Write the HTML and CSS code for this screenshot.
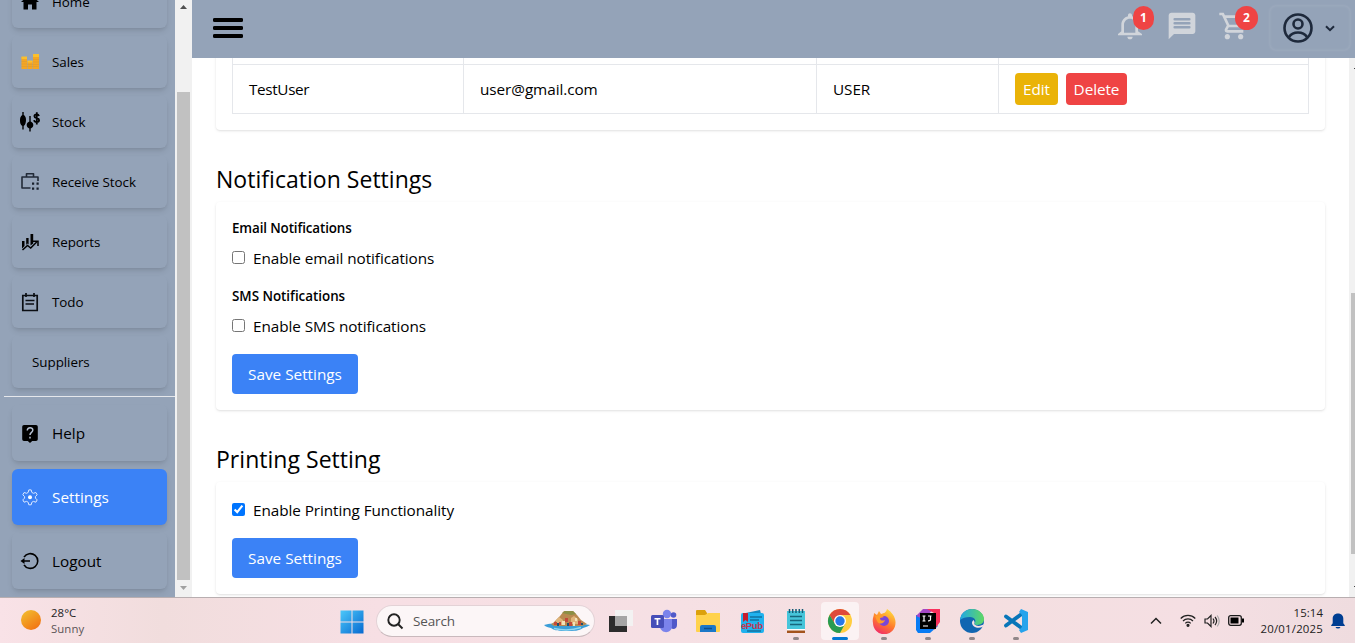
FILE: index.html
```html
<!DOCTYPE html>
<html lang="en">
<head>
<meta charset="utf-8">
<title>Settings</title>
<link rel="stylesheet" href="styles.css">
</head>
<body>
<div class="app">
  <aside class="sidebar">
    <nav class="menu">
      <a class="item"><svg class="ico" viewBox="0 0 20 20"><path d="M10 2 1 10h2.500v7.500h4.500v-5h4v5h4.500V10H19z"/></svg><span class="t-home">Home</span></a>
      <a class="item"><svg class="ico" viewBox="0 0 20 20"><path fill="#f5a623" d="M1.500 5h5.500v12H1.500zM7.500 9h5v8h-5zM13 3h6v14h-6z"/><path fill="#fbc02d" d="M1.500 4.500h5.500V7H1.500zM7.500 8.500h5v2h-5zM13 2h6v3h-6z"/><path d="M1.500 9.500h5.500M1.500 12h5.500M1.500 14.500h17M13 7.500h6M13 10h6M7.500 12.500H19" stroke="#d99a35" stroke-width=".6"/></svg><span>Sales</span></a>
      <a class="item"><svg class="ico" viewBox="0 0 20 20"><path d="M2.300 0h1.400v3c1.700 1 2.300 2.500 2.300 5s-.6 5-2.300 6v3.500H2.300V14C.5 13 0 11 0 8.500S.5 4 2.300 3zM9.300 4h1.400v5.500c1.900.8 2.600 2 2.600 3.500s-.7 2.700-2.600 3.500v3H9.300v-3C7.400 15.700 6.700 14.500 6.700 13s.7-2.700 2.600-3.500z"/><path d="M19 4c-.4-1.200-1.200-1.700-2.200-1.700-1.600 0-2.400.8-2.400 1.900 0 2.600 4.700 1.200 4.700 3.900 0 1.300-1 2.100-2.500 2.100-1.400 0-2.300-.8-2.500-2M16.800.3v12.200" fill="none" stroke="#000" stroke-width="1.800"/></svg><span>Stock</span></a>
      <a class="item"><svg class="ico" viewBox="0 0 20 20"><path d="M18 9V5H2v11h8.500M6.500 5V1.700h7V5" fill="none" stroke="#222b38" stroke-width="1.600" stroke-linejoin="round"/><path d="M12 10.500h2.200v2.200H12zM16.500 10.500h2.200v2.200h-2.200zM12 15.500h2.200v2.200H12zM16.500 15.500h2.200v2.200h-2.200z" fill="#18202c"/></svg><span>Receive Stock</span></a>
      <a class="item"><svg class="ico" viewBox="0 0 20 20"><path d="M2 9h2.500v5L2 16.500zM6.200 6h2.400v6.500L7.500 11.500 6.200 13zM10.500 2h2.700v9.500l-2.700 2z"/><path d="m2.500 18 5-4.500 3.200 2.500 6-6M13 9.300h5V14" fill="none" stroke="#000" stroke-width="1.500"/></svg><span>Reports</span></a>
      <a class="item"><svg class="ico" viewBox="0 0 20 20"><path d="M2.800 3.500h14.400v15H2.800zM6 1v4M14 1v4M5.500 8.500h9M5.500 12h8.500" fill="none" stroke="#0b0e13" stroke-width="1.700"/></svg><span>Todo</span></a>
      <a class="item"><span>Suppliers</span></a>
      <hr class="rule">
      <a class="item tall"><svg class="ico" viewBox="0 0 20 20"><path d="M4 2h12a1.800 1.800 0 0 1 1.800 1.800v12.400A1.800 1.800 0 0 1 16 18h-3.800L10 20l-2.200-2H4a1.800 1.800 0 0 1-1.800-1.800V3.800A1.800 1.800 0 0 1 4 2z"/><path d="M7.300 7.500C7.300 3.600 13 4 12.800 7.300 12.700 9.400 10 9.500 10 12M10 13.700v1.800" fill="none" stroke="#b5c0d2" stroke-width="1.500"/></svg><span>Help</span></a>
      <a class="item tall active"><svg class="ico" viewBox="0 0 20 20"><path d="M8.800 2.900h2.400l.6 2.500 1.600.9 2.500-.8 1.300 2.300-1.800 1.800v1.500l1.800 1.800-1.300 2.300-2.500-.8-1.600.9-.6 2.500H8.800l-.6-2.500-1.600-.9-2.500.8-1.300-2.300 1.800-1.800V9.600L2.800 7.800l1.300-2.300 2.500.8 1.600-.9z" fill="none" stroke="#dbe8ff" stroke-width="1" stroke-linejoin="round"/><circle cx="10" cy="10.300" r="2" fill="#fff"/></svg><span>Settings</span></a>
      <a class="item tall"><svg class="ico" viewBox="0 0 20 20"><path d="M4 6.200a7.400 7.400 0 1 1 0 7.600M2 10h8" fill="none" stroke="#000" stroke-width="1.600"/><path d="m.5 10 4-3v6z"/></svg><span>Logout</span></a>
    </nav>
    <div class="scrollbar">
      <svg width="17" height="15" viewBox="0 0 17 15"><path d="M5 9 8.500 5 12 9z" fill="#505050"/></svg>
      <div class="thumb"></div>
      <svg width="17" height="17" viewBox="0 0 17 17"><path d="M5 6h7l-3.500 4z" fill="#a0a0a0"/></svg>
    </div>
  </aside>
  <section class="content">
    <header class="topbar">
      <svg class="burger" width="30" height="22" viewBox="0 0 30 22"><path d="M1.500 3h27M1.500 11h27M1.500 19h27" stroke="#000" stroke-width="3.800" stroke-linecap="round"/></svg>
      <div class="actions">
        <div class="action"><svg width="32" height="32" viewBox="0 0 24 24" fill="#d1d5db"><path d="M12 22c1.100 0 2-.9 2-2h-4c0 1.100.9 2 2 2zm6-6v-5c0-3.070-1.630-5.640-4.500-6.320V4c0-.83-.67-1.500-1.500-1.500s-1.500.67-1.500 1.500v.68C7.640 5.360 5.500 7.920 5.500 11v5l-2.500 2v1h18v-1l-3-2zm-2 1H7.500v-6c0-2.480 2.010-4.500 4.500-4.500s4 2.020 4 4.500v6z"/></svg><b class="badge">1</b></div>
        <div class="action"><svg width="32" height="32" viewBox="0 0 24 24" fill="#d1d5db"><path d="M20 2H4c-1.100 0-1.990.9-1.990 2L2 22l4-4h14c1.100 0 2-.9 2-2V4c0-1.100-.9-2-2-2z"/><path d="M6.500 7h11M6.500 10h11M6.500 13h11" stroke="#94a3b8" stroke-width="1.900" stroke-linecap="round"/></svg></div>
        <div class="action"><svg width="32" height="32" viewBox="0 0 24 24" fill="#d1d5db"><path d="M15.550 13c.75 0 1.410-.41 1.750-1.030l3.580-6.490A.996.996 0 0 0 20.010 4H5.210l-.94-2H1v2h2l3.600 7.590-1.350 2.440C4.520 15.370 5.480 17 7 17h12v-2H7l1.100-2h7.450zM6.160 6h12.150l-2.760 5H8.530L6.160 6zM7 18c-1.100 0-1.990.9-1.990 2S5.900 22 7 22s2-.9 2-2-.9-2-2-2zm10 0c-1.100 0-1.990.9-1.990 2s.89 2 1.990 2 2-.9 2-2-.9-2-2-2z"/></svg><b class="badge">2</b></div>
        <div class="profile">
          <svg width="30" height="30" viewBox="0 0 30 30" fill="none" stroke="#1e293b" stroke-width="2.600"><circle cx="15" cy="15" r="13.500"/><circle cx="15" cy="11" r="4.500"/><path d="M6 24c4-6 14-6 18 0"/></svg>
          <svg width="10" height="7" viewBox="0 0 10 7" fill="none" stroke="#1e293b" stroke-width="2"><path d="m1 1.200 4 4 4-4"/></svg>
        </div>
      </div>
    </header>
    <div class="viewport">
      <main class="page">
        <div class="card users">
          <table class="table"><colgroup><col class="c1"><col class="c2"><col class="c3"><col></colgroup><tbody><tr class="prev"><td></td><td></td><td></td><td></td></tr>
          <tr><td class="name">TestUser</td><td>user@gmail.com</td><td>USER</td><td><div class="btns"><button class="small edit">Edit</button><button class="small delete">Delete</button></div></td></tr></tbody></table>
        </div>
        <h2 class="heading">Notification Settings</h2>
        <div class="card">
          <h3 class="sub">Email Notifications</h3>
          <label class="check"><input type="checkbox"><span>Enable email notifications</span></label>
          <h3 class="sub second">SMS Notifications</h3>
          <label class="check"><input type="checkbox"><span>Enable SMS notifications</span></label>
          <button class="save">Save Settings</button>
        </div>
        <h2 class="heading">Printing Setting</h2>
        <div class="card">
          <label class="check first"><input type="checkbox" checked><span>Enable Printing Functionality</span></label>
          <button class="save">Save Settings</button>
        </div>
      </main>
      <div class="pagebar"><i></i><div class="pagethumb"></div><i></i></div>
    </div>
  </section>
</div>
<footer class="taskbar">
  <div class="weather">
    <div class="sun"></div>
    <div><div>28°C</div><div class="dim">Sunny</div></div>
  </div>
  <div class="dock">
    <svg class="win" width="24" height="24" viewBox="0 0 24 24"><defs><linearGradient id="w" x1="0" y1="0" x2="1" y2="1"><stop offset="0" stop-color="#4cc8fa"/><stop offset="1" stop-color="#0669d0"/></linearGradient></defs><path fill="url(#w)" d="M.5 .5h11v11H.5zM12.500.5h11v11h-11zM.5 12.500h11v11H.5zM12.500 12.500h11v11h-11z"/></svg>
    <div class="search">
      <svg width="17" height="17" viewBox="0 0 17 17" fill="none" stroke="#222" stroke-width="1.900"><circle cx="7" cy="7" r="5.700"/><path d="m11 11 4.500 4.500"/></svg>
      <span>Search</span>
      <svg class="island" width="46" height="22" viewBox="0 0 46 22"><path fill="#3b9ed8" d="M0 15c6-2 10-1 14-2h20c4 1 8 1 12 2-3 2-5 2-7 3-4 3-9 3-16 3-8 0-12 0-16-3-3-1-5-1-7-3z"/><path d="M10 18.500c9 2 18 2 27-1" stroke="#91d7ef" stroke-width="1.500" fill="none"/><path fill="#b98a50" d="m9 13 7-7 4-5h9l4 4 4 5 6 4-5 2H10l-3-2z"/><path fill="#8b8f45" d="m18 3 3-2h8l3 3-5 1z"/><path fill="#e0b47a" d="m12 10 3-3 4 3v5h-7zM27 8l3-2 4 3v5h-7z"/><path fill="#c4493a" d="M10 12h3v3h-3zM21 8h3v4h-3zM34 11h3v4h-3zM25 12h3v4h-3zM15 12h2v3h-2z"/><path fill="#f3e1b7" d="M18 11h3v4h-3zM29 12h2v4h-2zM31 8h2v3h-2z"/><path fill="#274f68" d="M13 13h2v3h-2zM23 13h2v3h-2zM37 13h2v2h-2z"/></svg>
    </div>
    <div class="apps">
      <div class="app-icon"><svg viewBox="0 0 26 26"><path fill="#2c2c2c" d="M2 8h18v16H2z"/><path fill="#f2f2f2" fill-opacity=".95" d="M8 2h18v16H8z"/><path fill="#a5a5a5" d="M8 8h12v10H8z"/></svg></div>
      <div class="app-icon"><svg viewBox="0 0 26 26"><circle cx="16" cy="6" r="4.200" fill="#7b83eb"/><circle cx="22.500" cy="7" r="2.800" fill="#5059c9"/><path fill="#5059c9" d="M19 11h7v6c0 4-4 5-6 3z"/><path fill="#7b83eb" d="M9 11h12v7c0 8-11 8-12 1z"/><rect y="7" width="13" height="13" rx="1.500" fill="#464eb8"/><path fill="#fff" d="M3.500 10h6v1.600H7.300V17H5.600v-5.400H3.500z"/></svg></div>
      <div class="app-icon"><svg viewBox="0 0 26 26"><path fill="#dca10b" d="M1 3q0-1 1-1h8l2 3v5H1z"/><path fill="#ffd24c" d="M1 7h9l3-2h12v18q0 1-1 1H2q-1 0-1-1z"/><path fill="#1b78c8" d="M5 24v-5q0-2 2-2h12q2 0 2 2v5z"/><path d="M9 20.500h8" stroke="#0c4f8c" stroke-width="1.500"/></svg></div>
      <div class="app-icon"><svg viewBox="0 0 26 26"><path fill="#1787bd" d="m2 6 19-4 1 4z"/><rect x="2" y="5" width="23" height="20" rx="2" fill="#20b2ee"/><path fill="#c51c2d" d="M4 5h5v9l-2.500-2L4 14z"/><path d="M11 9h12M11 12h9M8 23h14" stroke="#13729f" stroke-width="1.500"/><text x="2" y="21" textLength="22" font-family="Liberation Sans" font-weight="bold" font-size="9.500" fill="#c5354f">ePub</text></svg></div>
      <div class="app-icon run"><svg viewBox="0 0 26 26"><path fill="#a3531c" d="M4 21h18v4H4z"/><path fill="#fff" d="M4 20h18v2.500H4z"/><path fill="#46c5da" d="M4 3h18v18H4z"/><path d="M7 8.500h12M7 12.500h12M7 16.500h12" stroke="#17667c" stroke-width="1.500"/><path d="M6.500 1v4M9.700 1v4M13 1v4M16.300 1v4M19.500 1v4" stroke="#155b76" stroke-width="1.500"/></svg></div>
      <div class="app-icon run current"><svg viewBox="0 0 26 26"><circle cx="13" cy="13" r="12" fill="#ffcd40"/><path fill="#df4a3c" d="M2.600 7a12 12 0 0 1 20.800 0H13L8 16z"/><path fill="#279b52" d="M2.600 7a12 12 0 0 0 10.400 18l5-9-10 0z"/><circle cx="13" cy="13" r="6" fill="#fff"/><circle cx="13" cy="13" r="4.700" fill="#2778e8"/></svg></div>
      <div class="app-icon run"><svg viewBox="0 0 26 26"><defs><linearGradient id="f" x1=".8" y1="0" x2=".3" y2="1"><stop stop-color="#ffe33c"/><stop offset=".55" stop-color="#ff7b2b"/><stop offset="1" stop-color="#f12b68"/></linearGradient></defs><path fill="url(#f)" d="M3 5l3 2 2-4 2 3c3-1 5-1 6-5 5 3 9 9 8.500 14A11 11 0 0 1 2 15C1 10 3 9 3 5z"/><circle cx="13" cy="13" r="5" fill="#7946d8"/><path fill="#ff9b29" d="M4 8c4-2 7-1 9 1l-4 1c0 3 3 3 5 2-1 4-6 5-8 1z"/></svg></div>
      <div class="app-icon run"><svg viewBox="0 0 26 26"><path fill="#087cf4" d="M1 7h12l10 11-8 7H3l-2-3z"/><path fill="#a348c5" d="m1 8 7-7h11L8 11z"/><path fill="#fa315c" d="M12 1h13v13l-6 8V5z"/><path fill="#000" d="M5 5h16v16H5z"/><path d="M7.500 8h3M9 8v5M7.500 13h3M13 8h3.500M15.500 8v3.500q0 1.500-2.500 1.300M8 18h5" fill="none" stroke="#fff" stroke-width="1.200"/></svg></div>
      <div class="app-icon run"><svg viewBox="0 0 26 26"><defs><linearGradient id="e"><stop stop-color="#20a7e5"/><stop offset="1" stop-color="#60d962"/></linearGradient></defs><circle cx="13" cy="13" r="12" fill="#1166b1"/><path fill="url(#e)" d="M1 12C2 5 7 1 13 1c7 0 12 5 12 10 0 6-7 7-10 5 3-3 1-7-4-7-4 0-8 1-10 3z"/><path fill="#f6e2e5" d="M15 16c3 3 7 2 10.500 0l-2 3c-5 2-10 0-10.500-4 0-2 1-2 1.500-3 1 1 1.500 3 .5 4z"/></svg></div>
      <div class="app-icon run"><svg viewBox="0 0 26 26"><path fill="none" stroke="#0876b9" stroke-width="3.800" stroke-linecap="round" d="M20 5 3 17.500M3 8.500 20 21"/><path fill="#26a3ec" d="m18 1 7 3v18l-7 3-2-3 3-3V7l-3-3z"/></svg></div>
    </div>
  </div>
  <div class="tray">
    <svg width="12" height="8" viewBox="0 0 12 8" fill="none" stroke="#222" stroke-width="1.500"><path d="m1 6.500 5-5 5 5"/></svg>
    <svg class="wifi" width="16" height="13" viewBox="0 0 16 13" fill="none" stroke="#222" stroke-width="1.200"><path d="M.7 4.500a10.300 10.300 0 0 1 14.600 0M3 7a7 7 0 0 1 10 0M5.300 9.300a3.800 3.800 0 0 1 5.400 0"/><circle cx="8" cy="11.300" r="1" fill="#222"/></svg>
    <svg class="vol" width="16" height="14" viewBox="0 0 16 14" fill="none" stroke="#222" stroke-width="1.200"><path d="M1 5h2.500L7 1.500v11L3.500 9H1zM9 4.500q2 2.500 0 5M11 3q3.300 4 0 8"/><path stroke="#aaa" d="M13.200 1.500q4 5.500 0 11"/></svg>
    <svg class="bat" width="16" height="11" viewBox="0 0 16 11"><rect x=".7" y=".7" width="12.600" height="9.600" rx="2" fill="none" stroke="#1a1a1a" stroke-width="1.300"/><path d="M2.500 2.500h8v6h-8zM14 3.500h2v4h-2z"/></svg>
    <div class="clock"><div>15:14</div><div class="date">20/01/2025</div></div>
    <svg class="bell" width="14" height="16" viewBox="0 0 14 16" fill="#003e92"><path d="M7 .5c3.300 0 5.300 2.200 5.300 5v4.700l1.500 2v.8H.2v-.8l1.500-2V5.500c0-2.800 2-5 5.300-5zM4.500 14h5Q9 15.500 7 15.500T4.500 14z"/></svg>
  </div>
</footer>
</body>
</html>
```

FILE: styles.css
```css
* { box-sizing: border-box; }
body { margin: 0; height: 643px; overflow: hidden; display: flex; flex-direction: column; font-family: "Open Sans", "Noto Sans", sans-serif; font-size: 15.3px; line-height: 24px; letter-spacing: -.07px; color: #000; background: #fff; }
h2, h3 { margin: 0; }
button { border: 0; font: inherit; letter-spacing: inherit; color: #fff; border-radius: 4px; }
svg { display: block; flex: none; }

.app { height: 597px; flex: none; display: flex; overflow: hidden; }
.sidebar { width: 192px; flex: none; display: flex; background: #94a3b8; overflow: hidden; }
.menu { width: 175px; flex: none; margin-top: -24px; display: flex; flex-direction: column; gap: 8px; padding-left: 12px; }
.item { width: 155px; height: 52px; flex: none; display: flex; align-items: center; gap: 12px; padding-left: 8px; border-radius: 6px; font-size: 13.4px; letter-spacing: -.04px; box-shadow: 0 4px 6px -1px rgba(0,0,0,.1), 0 2px 4px -2px rgba(0,0,0,.1); }
.item > span:only-child { padding-left: 12px; }
.tall { height: 56px; font-size: 15.3px; letter-spacing: 0; }
.active { background: #3b82f6; color: #fff; }
.ico { width: 20px; height: 20px; }
.rule { width: 171px; height: 1px; margin: 0 0 0 -8px; border: 0; background: #e5e7eb; flex: none; }
.scrollbar { width: 17px; display: flex; flex-direction: column; align-items: center; background: #f1f1f1; }
.thumb { width: 13px; height: 488px; margin-top: 77px; background: #c1c1c1; }

.content { flex: 1; min-width: 0; display: flex; flex-direction: column; }
.topbar { height: 58px; flex: none; display: flex; justify-content: space-between; align-items: center; background: #94a3b8; padding: 0 5px 2px 21px; }
.actions { display: flex; align-items: center; gap: 20px; }
.action { position: relative; margin-top: -5px; }
.badge { position: absolute; top: -4px; right: -8px; width: 21px; height: 24px; border-radius: 12px; background: #ef4444; color: #fff; font-size: 12px; font-weight: 700; text-align: center; }
.action:nth-child(3) .badge { width: 23px; }
.profile { width: 80px; height: 44px; display: flex; align-items: center; gap: 12px; padding-left: 13px; border-radius: 6px; box-shadow: 0 0 3px rgba(255,255,255,.16), inset 0 0 3px rgba(255,255,255,.1); }

.viewport { flex: 1; min-height: 0; display: flex; }
.page { flex: 1; padding: 0 24px; overflow: hidden; }
.card { background: #fff; padding: 16px; border-radius: 4px; box-shadow: 0 1px 3px rgba(0,0,0,.1), 0 1px 2px -1px rgba(0,0,0,.1); }
.users { height: 92px; margin-top: -20px; }
.table { width: 1077px; table-layout: fixed; border-collapse: collapse; }
.table td { border: 1px solid #e5e7eb; height: 49px; padding: 0 16px; }
.table .prev td { height: 10px; }
.table .name { letter-spacing: -.35px; }
.c1 { width: 231px; }
.c2 { width: 353px; }
.c3 { width: 182px; }
.btns { display: flex; gap: 8px; }
.small { height: 32px; padding: 0; }
.edit { width: 43px; background: #eab308; }
.delete { width: 61px; background: #ef4444; }
.heading { font-size: 23px; font-weight: 400; line-height: 36px; letter-spacing: .03px; margin: 31px 0 5px; }
.sub { font-size: 13.400px; font-weight: 600; line-height: 20px; letter-spacing: -.12px; margin-bottom: 8px; }
.second { margin-top: 16px; letter-spacing: -.02px; }
.check { display: flex; align-items: center; gap: 8px; height: 24px; }
.check input { width: 13px; height: 13px; margin: 0 0 2px; accent-color: #0075ff; }
.save { display: block; width: 126px; height: 40px; padding: 0; margin-top: 16px; background: #3b82f6; letter-spacing: 0; }
.pagebar { width: 6px; flex: none; background: #f1f1f1; display: flex; flex-direction: column; align-items: flex-end; padding: 10px 0 10px; }
.pagebar i { width: 1px; height: 1px; background: #444; }
.pagethumb { width: 4px; height: 261px; margin: 224px 0 32px; background: #c1c1c1; }

.taskbar { height: 46px; flex: none; display: flex; align-items: center; border-top: 1px solid #b8aeb0; background: linear-gradient(90deg, #f9e2e7 0, #f1dddd 12%, #f7dfe4 28%, #f6e0e4 50%, #f4dfe0 68%, #f5dfe3 88%, #efdcdf 100%); font-size: 11.400px; line-height: 16px; letter-spacing: .07px; color: #222; }
.weather { width: 340px; display: flex; gap: 10px; align-items: center; padding-left: 21px; }
.sun { width: 20px; height: 20px; border-radius: 50%; background: linear-gradient(145deg, #f2c231, #f26a0f); margin-bottom: 2px; }
.dim { color: #5c5557; }
.dock { display: flex; align-items: center; }
.win { margin-top: 2px; }
.search { width: 219px; height: 32px; margin: 1px 0 0 12px; padding: 0 4px 0 10px; display: flex; align-items: center; border: 1px solid #e3d2d6; border-bottom-color: #c9b9bd; border-radius: 16px; background: #fcf6f7; font-size: 13.500px; letter-spacing: -.15px; color: #555; }
.search span { margin-left: 9px; }
.island { margin-left: auto; }
.apps { display: flex; gap: 6px; margin-left: 6px; }
.app-icon { position: relative; width: 38px; height: 38px; padding: 6px; border-radius: 4px; }
.app-icon svg { width: 26px; height: 26px; }
.run::after { content: ""; position: absolute; left: 16px; bottom: 0; width: 6px; height: 3px; border-radius: 2px; background: #918789; }
.current { background: #fbf2f3; }
.current::after { left: 11px; width: 16px; background: #0078d4; }
.tray { margin-left: auto; display: flex; align-items: center; padding-right: 10px; }
.wifi { margin-left: 18px; }
.vol { margin-left: 8px; }
.bat { margin-left: 8px; }
.clock { width: 71px; margin-left: 8px; text-align: right; white-space: nowrap; }
.date { letter-spacing: .2px; }
.bell { margin-left: 8px; }
```
